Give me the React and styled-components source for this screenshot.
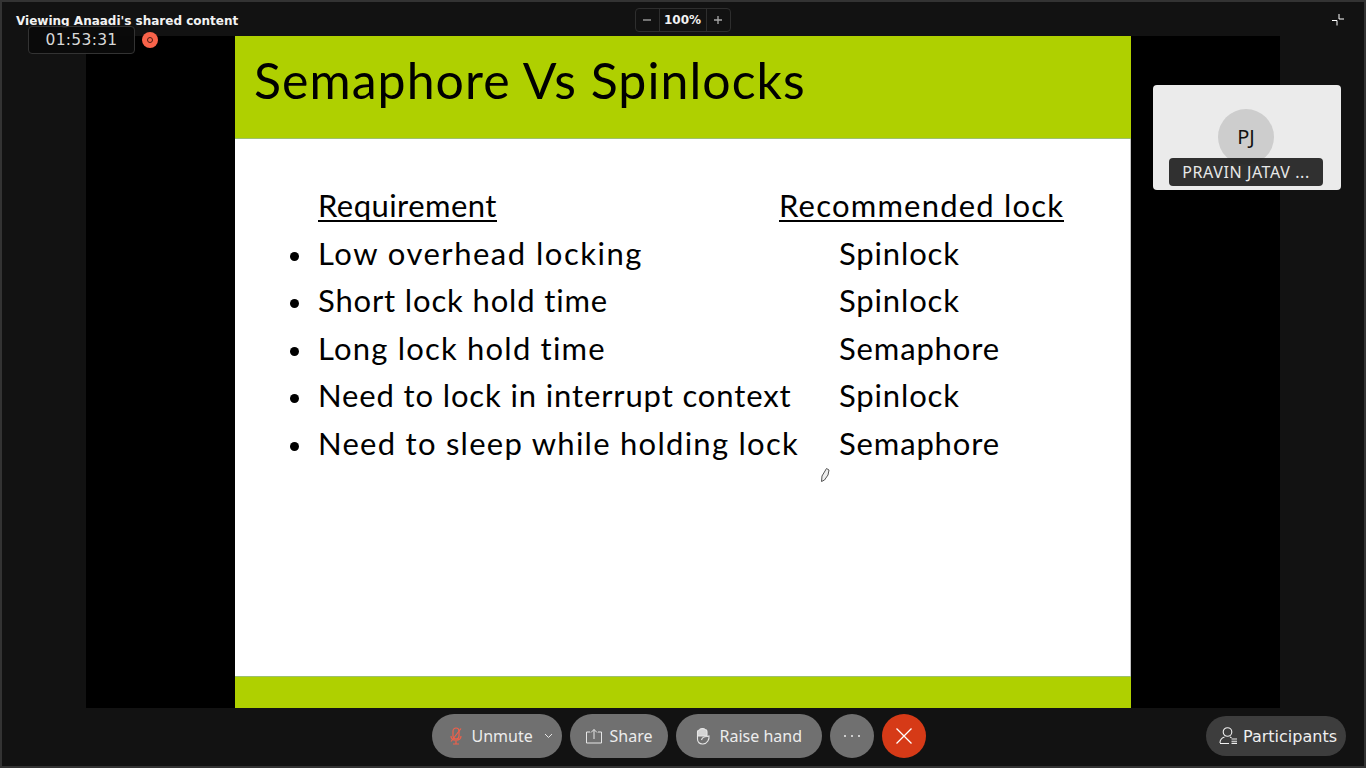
import React from "react";
import styled, { createGlobalStyle } from "styled-components";

const GlobalStyle = createGlobalStyle`
	html, body {
		margin: 0;
		padding: 0;
		background: #121212;
	}
	* {
		box-sizing: border-box;
	}
`;

const uiFont = `"DejaVu Sans", sans-serif`;
const slideFont = `Lato, "Open Sans", sans-serif`;

// track is the letter spacing that makes each line as long as on the slide
const rows = [
	{ need: "Low overhead locking", lock: "Spinlock", track: 1.5 },
	{ need: "Short lock hold time", lock: "Spinlock", track: 0.85 },
	{ need: "Long lock hold time", lock: "Semaphore", track: 1.2 },
	{ need: "Need to lock in interrupt context", lock: "Spinlock", track: 0.87 },
	{ need: "Need to sleep while holding lock", lock: "Semaphore", track: 1.27 },
];

export default function App() {
	return (
		<Window>
			<GlobalStyle />
			<TopBar>
				<Title>Viewing Anaadi's shared content</Title>
				<Zoom>
					<ZoomButton>
						<svg width="10" height="10" viewBox="0 0 10 10">
							<path d="M1 5h8" stroke="#a8a8a8" strokeWidth="1.3" />
						</svg>
					</ZoomButton>
					<ZoomValue>100%</ZoomValue>
					<ZoomButton>
						<svg width="10" height="10" viewBox="0 0 10 10">
							<path d="M1 5h8M5 1v8" stroke="#a8a8a8" strokeWidth="1.3" />
						</svg>
					</ZoomButton>
				</Zoom>
				<Collapse width="14" height="14" viewBox="0 0 14 14">
					<path d="M1 7.5h5v5M8 1v5h5" fill="none" stroke="#fff" strokeWidth="1" />
				</Collapse>
			</TopBar>

			<Timer>01:53:31</Timer>
			<RecordDot />

			<Stage>
				<Slide>
					<SlideHeader>Semaphore Vs Spinlocks</SlideHeader>
					<SlideBody>
						<LockTable>
							<HeadCell $track={0.45}>Requirement</HeadCell>
							<HeadCell $track={1.2}>Recommended lock</HeadCell>
							{rows.map(({ need, lock, track }) => (
								<React.Fragment key={need}>
									<NeedCell $track={track}>{need}</NeedCell>
									<LockCell>{lock}</LockCell>
								</React.Fragment>
							))}
						</LockTable>
						<Pen width="10" height="16" viewBox="0 0 10 16">
							<path d="M1.5 14.5 2 9 6.5 1.5 9 3 8 8 4.5 13Z" fill="#eee" stroke="#555" strokeWidth="1" />
						</Pen>
					</SlideBody>
					<SlideFooter />
				</Slide>
			</Stage>

			<Thumbnail>
				<Avatar>PJ</Avatar>
				<NameTag>PRAVIN JATAV ...</NameTag>
			</Thumbnail>

			<BottomBar>
				<Controls>
					<Pill $width={130} $pad={16} $gap={8}>
						<svg width="16" height="18" viewBox="0 0 16 18" fill="none" stroke="#f0604a" strokeWidth="1.2">
							<rect x="5" y="1" width="6" height="11" rx="3" />
							<path d="M3 9c0 5.500 10 5.500 10 0M8 14v3M5 17h6M3 14.500 13 1.500" />
						</svg>
						Unmute
						<Caret width="9" height="6" viewBox="0 0 9 6">
							<path d="M1 1l3.5 3.5L8 1" fill="none" stroke="#e6e6e6" strokeWidth="1" />
						</Caret>
					</Pill>
					<Pill $width={98} $pad={15} $gap={7}>
						<svg width="18" height="16" viewBox="0 0 18 16" fill="none" stroke="#e6e6e6" strokeWidth="1">
							<path d="M5 4H1.500v11h15V4H13M9 11V1.500M6 4.500l3-3 3 3" />
						</svg>
						Share
					</Pill>
					<Pill $width={146} $pad={20} $gap={9}>
						<svg width="15" height="18" viewBox="0 0 15 18" fill="none" stroke="#e6e6e6" strokeWidth="1.1">
							<path d="M1.500 9V5c0-1.500 1-2 2-2 .5-1.500 4.500-2 5.500-.5 1.500 0 2 1 2 2.500v4Z" fill="#d4d4d4" />
							<path d="M1.500 9v3c0 3 2 5.300 5.500 5 4.500-.5 6.500-5 6-8l-2 .5c-2.500 0-5 1.500-5.500 3.500" />
						</svg>
						Raise hand
					</Pill>
					<RoundButton>
						<svg width="18" height="4" viewBox="0 0 18 4">
							<circle cx="2" cy="2" r="1" fill="#eee" />
							<circle cx="9" cy="2" r="1" fill="#eee" />
							<circle cx="16" cy="2" r="1" fill="#eee" />
						</svg>
					</RoundButton>
					<RoundButton $danger>
						<svg width="18" height="18" viewBox="0 0 18 18">
							<path d="M1.500 1.500l15 15M16.500 1.500l-15 15" stroke="#fff" strokeWidth="1.3" />
						</svg>
					</RoundButton>
				</Controls>
				<Participants>
					<svg width="19" height="18" viewBox="0 0 19 18" fill="none" stroke="#f0f0f0" strokeWidth="1.1">
						<circle cx="8.500" cy="5" r="4.300" />
						<path d="M1 16c0-3 1.500-5 4.500-6M11 10l1.500.8M1 16.500h9M12.500 12h5.500M12.500 14.200h5.500M12.500 16.400h5.500" />
					</svg>
					Participants
				</Participants>
			</BottomBar>
		</Window>
	);
}

const Window = styled.div`
	position: relative;
	width: 1366px;
	height: 768px;
	overflow: hidden;
	display: flex;
	flex-direction: column;
	background: #121212;
	border: 2px solid #333;
`;

const TopBar = styled.div`
	height: 34px;
	flex: none;
	position: relative;
	display: flex;
	justify-content: center;
	padding-top: 6px;
`;

const Title = styled.div`
	position: absolute;
	left: 14px;
	top: 11px;
	font: bold 12px ${uiFont};
	line-height: 16px;
	color: #f2f2f2;
	white-space: nowrap;
`;

const Zoom = styled.div`
	width: 96px;
	height: 24px;
	margin-left: -1px;
	display: flex;
	border: 1px solid #2e2e2e;
	border-radius: 4px;
`;

const ZoomButton = styled.div`
	width: 23px;
	display: flex;
	align-items: center;
	justify-content: center;
`;

const ZoomValue = styled.div`
	flex: 1;
	text-align: center;
	font: bold 12px/22px ${uiFont};
	color: #f2f2f2;
	border-left: 1px solid #2e2e2e;
	border-right: 1px solid #2e2e2e;
`;

const Collapse = styled.svg`
	position: absolute;
	right: 19px;
	top: 11px;
`;

const Timer = styled.div`
	position: absolute;
	left: 26px;
	top: 24px;
	width: 107px;
	height: 28px;
	background: rgba(10, 10, 10, 0.92);
	border: 1px solid #333;
	border-radius: 4px;
	text-align: center;
	font: 15.5px/26px ${uiFont};
	letter-spacing: 0.3px;
	color: #d8d8d8;
	z-index: 3;
`;

const RecordDot = styled.div`
	position: absolute;
	left: 140px;
	top: 30px;
	width: 16px;
	height: 16px;
	border-radius: 50%;
	background: #f9634a;
	z-index: 3;

	&::after {
		content: "";
		position: absolute;
		inset: 5px;
		border: 1px solid #4a1b12;
		border-radius: 50%;
	}
`;

const Stage = styled.div`
	flex: 1;
	min-height: 0;
	margin: 0 84px;
	background: #000;
	display: flex;
	justify-content: center;
`;

const Slide = styled.div`
	width: 896px;
	display: flex;
	flex-direction: column;
	background: #fff;
	color: #000;
	font-family: ${slideFont};
`;

const SlideHeader = styled.div`
	height: 103px;
	flex: none;
	padding: 12px 0 0 19px;
	background: #afd000;
	border-bottom: 1px solid #9cc070;
	font-size: 50px;
	line-height: 64px;
	letter-spacing: 1.05px;
`;

const SlideBody = styled.div`
	flex: 1;
	position: relative;
	padding: 42px 0 0 83px;
	border-right: 1px solid #c4c4c4;
`;

const LockTable = styled.div`
	display: grid;
	grid-template-columns: 461px auto;
	grid-auto-rows: 47.5px;
	font-size: 31px;
	line-height: 49px;
`;

const HeadCell = styled.div`
	justify-self: start;
	height: 41px;
	line-height: 48px;
	border-bottom: 2px solid #000;
	letter-spacing: ${(p) => p.$track}px;
`;

const NeedCell = styled.div`
	position: relative;
	white-space: nowrap;
	letter-spacing: ${(p) => p.$track}px;

	&::before {
		content: "";
		position: absolute;
		left: -28px;
		top: 23px;
		width: 9px;
		height: 9px;
		border-radius: 50%;
		background: #000;
	}
`;

const LockCell = styled.div`
	padding-left: 60px;
	white-space: nowrap;
	letter-spacing: 0.85px;
`;

const Pen = styled.svg`
	position: absolute;
	left: 585px;
	top: 328px;
`;

const SlideFooter = styled.div`
	height: 32px;
	flex: none;
	background: #afd000;
	border-top: 1px solid #9cc070;
`;

const Thumbnail = styled.div`
	position: absolute;
	left: 1151px;
	top: 83px;
	width: 188px;
	height: 105px;
	padding: 24px 2px 0 0;
	background: #ebebeb;
	border-radius: 4px;
	display: flex;
	flex-direction: column;
	align-items: center;
	z-index: 3;
`;

const Avatar = styled.div`
	width: 56px;
	height: 56px;
	border-radius: 50%;
	background: #cdcdcd;
	text-align: center;
	font: 20px/56px "Noto Sans", sans-serif;
	color: #111;
`;

const NameTag = styled.div`
	width: 154px;
	height: 28px;
	margin-top: -7px;
	background: rgba(28, 28, 28, 0.9);
	border-radius: 4px;
	text-align: center;
	font: 16px/28px "Noto Sans", sans-serif;
	letter-spacing: 0.6px;
	color: #e8e8e8;
`;

const BottomBar = styled.div`
	height: 58px;
	flex: none;
	position: relative;
	display: flex;
	justify-content: center;
	padding-top: 6px;
`;

const Controls = styled.div`
	display: flex;
	gap: 8px;
	margin-left: -9px;
`;

const Pill = styled.div`
	width: ${(p) => p.$width}px;
	height: 44px;
	padding-left: ${(p) => p.$pad}px;
	display: flex;
	align-items: center;
	gap: ${(p) => p.$gap}px;
	border-radius: 22px;
	background: #707070;
	font: 16px "Noto Sans", sans-serif;
	color: #ececec;
	white-space: nowrap;
`;

const Caret = styled.svg`
	margin-left: 3px;
`;

const RoundButton = styled.div`
	width: 44px;
	height: 44px;
	border-radius: 50%;
	background: ${(p) => (p.$danger ? "#d63a17" : "#707070")};
	display: flex;
	align-items: center;
	justify-content: center;
`;

const Participants = styled.div`
	position: absolute;
	right: 18px;
	top: 8px;
	width: 140px;
	height: 40px;
	padding-left: 13px;
	display: flex;
	align-items: center;
	gap: 5px;
	border-radius: 20px;
	background: #3d3d3d;
	font: 16px ${uiFont};
	color: #efefef;
	white-space: nowrap;
`;
